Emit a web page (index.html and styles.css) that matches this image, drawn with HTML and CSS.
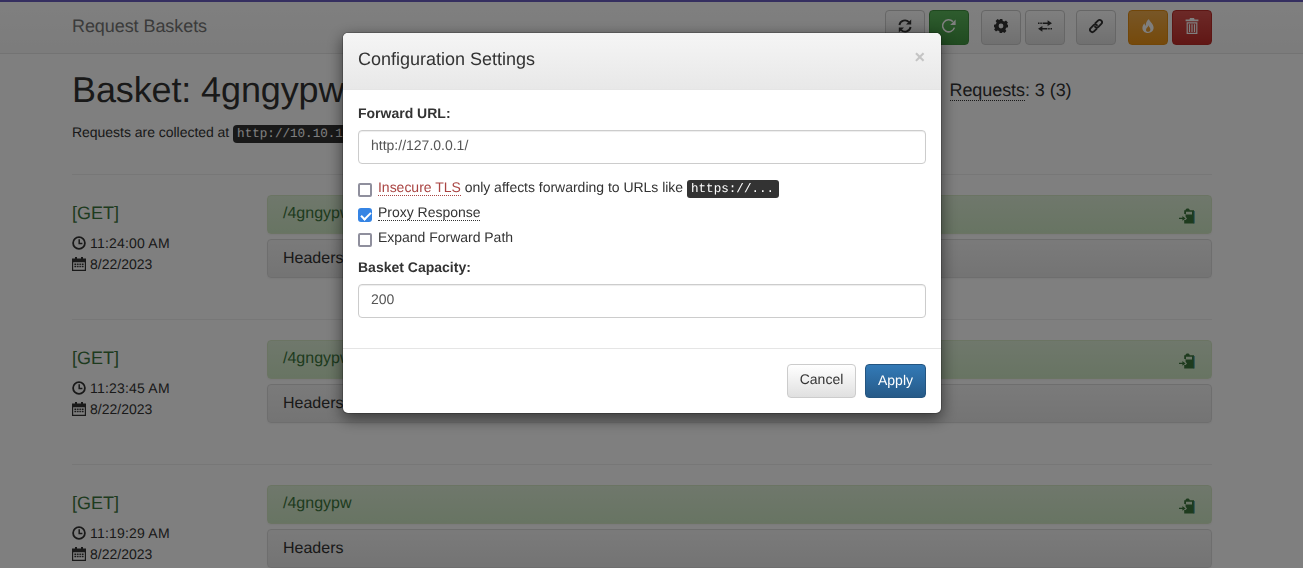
FILE: index.html
```html
<!DOCTYPE html>
<html lang="en">
<head>
<meta charset="utf-8">
<title>Request Baskets</title>
<link rel="stylesheet" href="styles.css">
</head>
<body>
<svg class="defs" aria-hidden="true">
  <symbol id="i-refresh" viewBox="0 0 14 14">
    <path d="M1.4 6A5.6 5.6 0 0 1 11 3.2" fill="none" stroke="currentColor" stroke-width="1.9"/>
    <path d="M13.2 .4V5.6H8Z" fill="currentColor"/>
    <path d="M12.6 8A5.6 5.6 0 0 1 3 10.8" fill="none" stroke="currentColor" stroke-width="1.9"/>
    <path d="M.8 13.6V8.4H6Z" fill="currentColor"/>
  </symbol>
  <symbol id="i-repeat" viewBox="0 0 14 14">
    <path d="M12.4 8.6A6 6 0 1 1 10.9 2.6" fill="none" stroke="currentColor" stroke-width="1.5"/>
    <path d="M13.6 .6V6H8.2Z" fill="currentColor"/>
  </symbol>
  <symbol id="i-cog" viewBox="0 0 14 14">
    <path fill-rule="evenodd" fill="currentColor" d="M5.7 0H8.3L8.8 1.9 10.4 2.6 12 1.6 13.9 3.5 12.9 5.1 13.6 5.7 14 5.7V8.3L12.1 8.8 11.4 10.4 12.4 12 10.5 13.9 8.9 12.9 8.3 13.1V14H5.7L5.2 12.1 3.6 11.4 2 12.4 .1 10.5 1.1 8.9 .4 8.3H0V5.7L1.9 5.2 2.6 3.6 1.6 2 3.5 .1 5.1 1.1 5.7 .9ZM7 4.6A2.4 2.4 0 1 0 7 9.4 2.4 2.4 0 1 0 7 4.6Z"/>
  </symbol>
  <symbol id="i-transfer" viewBox="0 0 14 14">
    <path fill="currentColor" d="M0 3.4H1.5V5H0ZM2.3 3.4H3.8V5H2.3ZM4.6 3.4H9.6V1.2L14 4.2 9.6 7V5H4.6ZM4.4 7V9H9.4V10.6H4.4V12.8L0 9.8ZM10.2 9H11.7V10.6H10.2ZM12.5 9H14V10.6H12.5Z"/>
  </symbol>
  <symbol id="i-link" viewBox="0 0 14 16">
    <g fill="none" stroke="currentColor" stroke-width="1.9" stroke-linecap="round">
      <path d="M6.4 5.2 9 2.6A2.3 2.3 0 0 1 12.3 5.9L9.4 8.8A2.3 2.3 0 0 1 6.1 8.8"/>
      <path d="M7.6 10.8 5 13.4A2.3 2.3 0 0 1 1.7 10.1L4.6 7.2A2.3 2.3 0 0 1 7.9 7.2"/>
    </g>
  </symbol>
  <symbol id="i-fire" viewBox="0 0 14 14">
    <path fill="currentColor" fill-rule="evenodd" d="M8 0C8.2 2.4 12.6 4.4 12.6 8.8 12.6 11.8 10.2 14 7 14 3.6 14 1.4 11.8 1.4 9 1.4 7.2 2.2 5.4 3.6 4.2 3.6 5.4 4 6.2 4.8 6.8 4.6 4 5.8 1.6 8 0ZM7.4 6.2C7.4 8 5 8.8 5 11 5 12 5.8 12.8 7 12.8 8.4 12.8 9.4 11.8 9.4 10.4 9.4 8.4 7.8 8 7.4 6.2Z"/>
  </symbol>
  <symbol id="i-trash" viewBox="0 0 14 16">
    <path fill="currentColor" fill-rule="evenodd" d="M5 0H9L9.6 1.6H13.4V3.2H.6V1.6H4.4ZM1.6 4.2H12.4V16H1.6ZM2.8 5.4V14.8H11.2V5.4ZM3.9 6.2H5.1V14H3.9ZM6.4 6.2H7.6V14H6.4ZM8.9 6.2H10.1V14H8.9Z"/>
  </symbol>
  <symbol id="i-time" viewBox="0 0 14 14">
    <circle cx="7" cy="7" r="5.9" fill="none" stroke="currentColor" stroke-width="1.8"/>
    <path d="M7.2 3.2V7.4H10.4" fill="none" stroke="currentColor" stroke-width="1.5"/>
  </symbol>
  <symbol id="i-calendar" viewBox="0 0 14 14">
    <path fill="currentColor" fill-rule="evenodd" d="M3 0H5V1.4H9V0H11V1.4H14V14H0V1.4H3ZM1.2 5.2V12.8H12.8V5.2ZM2.4 6.4H4.3V7.9H2.4ZM5.1 6.4H6.6V7.9H5.1ZM7.4 6.4H8.9V7.9H7.4ZM9.7 6.4H11.6V7.9H9.7ZM2.4 8.8H4.3V10.3H2.4ZM5.1 8.8H6.6V10.3H5.1ZM7.4 8.8H8.9V10.3H7.4ZM9.7 8.8H11.6V10.3H9.7Z"/>
  </symbol>
  <symbol id="i-clip" viewBox="0 0 16 16">
    <path fill="currentColor" fill-rule="evenodd" d="M8.6 .4C9.8.4 10.6 1 10.8 2.2H15V15.6H5.2V12H6.6L8 10.4 6.6 8.8V6H5.2V2.2H6.4C6.6 1 7.4.4 8.6.4ZM7 3.8V6.6H13V3.8Z"/>
    <path fill="currentColor" d="M0 9.8H3.4V8L6.6 10.4 3.4 12.8V11H0Z"/>
    <path fill="#2a8c9c" d="M14.6 3H15.6V15.6H14.6Z"/>
  </symbol>
</svg>

<nav class="navbar">
  <div class="container nav-inner">
    <a class="brand">Request Baskets</a>
    <div class="toolbar">
      <div class="tool-group">
        <button class="btn"><svg class="ico"><use href="#i-refresh"/></svg></button>
        <button class="btn btn-success"><svg class="ico"><use href="#i-repeat"/></svg></button>
      </div>
      <div class="tool-group">
        <button class="btn"><svg class="ico"><use href="#i-cog"/></svg></button>
        <button class="btn"><svg class="ico"><use href="#i-transfer"/></svg></button>
      </div>
      <div class="tool-group">
        <button class="btn"><svg class="ico ico-tall"><use href="#i-link"/></svg></button>
      </div>
      <div class="tool-group">
        <button class="btn btn-warning"><svg class="ico"><use href="#i-fire"/></svg></button>
        <button class="btn btn-danger"><svg class="ico ico-tall"><use href="#i-trash"/></svg></button>
      </div>
    </div>
  </div>
</nav>

<main class="container">
  <div class="basket-head">
    <div class="basket-title">
      <h1>Basket: 4gngypw</h1>
      <p class="collect">Requests are collected at <code class="code">http://10.10.11.224:55555/4gngypw</code></p>
    </div>
    <h4 class="basket-count"><abbr class="hint">Requests</abbr>: 3 (3)</h4>
  </div>

  <hr class="rule">
  <section class="req">
    <div class="req-meta">
      <h4 class="method">[GET]</h4>
      <div class="stamp stamp-time"><svg class="ico-sm"><use href="#i-time"/></svg>11:24:00 AM</div>
      <div class="stamp"><svg class="ico-sm"><use href="#i-calendar"/></svg>8/22/2023</div>
    </div>
    <div class="req-body">
      <div class="panel panel-path"><span>/4gngypw</span><svg class="ico-clip"><use href="#i-clip"/></svg></div>
      <div class="panel panel-head">Headers</div>
    </div>
  </section>

  <hr class="rule">
  <section class="req">
    <div class="req-meta">
      <h4 class="method">[GET]</h4>
      <div class="stamp stamp-time"><svg class="ico-sm"><use href="#i-time"/></svg>11:23:45 AM</div>
      <div class="stamp"><svg class="ico-sm"><use href="#i-calendar"/></svg>8/22/2023</div>
    </div>
    <div class="req-body">
      <div class="panel panel-path"><span>/4gngypw</span><svg class="ico-clip"><use href="#i-clip"/></svg></div>
      <div class="panel panel-head">Headers</div>
    </div>
  </section>

  <hr class="rule">
  <section class="req">
    <div class="req-meta">
      <h4 class="method">[GET]</h4>
      <div class="stamp stamp-time"><svg class="ico-sm"><use href="#i-time"/></svg>11:19:29 AM</div>
      <div class="stamp"><svg class="ico-sm"><use href="#i-calendar"/></svg>8/22/2023</div>
    </div>
    <div class="req-body">
      <div class="panel panel-path"><span>/4gngypw</span><svg class="ico-clip"><use href="#i-clip"/></svg></div>
      <div class="panel panel-head">Headers</div>
    </div>
  </section>
</main>

<div class="backdrop"></div>

<div class="modal-wrap">
  <div class="modal" role="dialog">
    <header class="modal-header">
      <h4 class="modal-title">Configuration Settings</h4>
      <span class="close">×</span>
    </header>
    <div class="modal-body">
      <label class="field-label">Forward URL:</label>
      <input class="input" type="text" value="http://127.0.0.1/">
      <div class="checks">
        <label class="check"><input type="checkbox"><span><abbr class="hint danger">Insecure TLS</abbr> only affects forwarding to URLs like <kbd class="kbd">https://...</kbd></span></label>
        <label class="check"><input type="checkbox" checked><span><abbr class="hint">Proxy Response</abbr></span></label>
        <label class="check"><input type="checkbox"><span>Expand Forward Path</span></label>
      </div>
      <label class="field-label">Basket Capacity:</label>
      <input class="input" type="text" value="200">
    </div>
    <footer class="modal-footer">
      <button class="btn btn-cancel">Cancel</button>
      <button class="btn btn-primary">Apply</button>
    </footer>
  </div>
</div>
</body>
</html>
```
FILE: styles.css
```css
* { box-sizing: border-box; }
html, body { height: 100%; overflow: hidden; }
body {
  margin: 0;
  padding-right: 19px;
  background: #fff;
  color: #333;
  font: 14px/20px "Liberation Sans", Arial, sans-serif;
  text-rendering: geometricPrecision;
}
.defs { position: absolute; width: 0; height: 0; }

.container { width: 1140px; margin: 0 auto; }

.navbar {
  height: 54px;
  border-top: 2px solid #6b5fc0;
  border-bottom: 1px solid #e7e7e7;
  background: linear-gradient(#fff, #f8f8f8);
  margin-right: -19px;
  padding-right: 19px;
  margin-bottom: 14px;
}
.nav-inner { display: flex; justify-content: space-between; align-items: flex-start; }
.brand { font-size: 18px; line-height: 20px; color: #777; margin-top: 14px; letter-spacing: -.07px; }
.toolbar { display: flex; gap: 12px; margin-top: 8px; }
.tool-group { display: flex; gap: 4px; }
.tool-group:nth-child(3) { margin-left: -1px; }

.btn {
  display: inline-flex;
  align-items: center;
  justify-content: center;
  height: 35px;
  width: 40px;
  padding: 0;
  border: 1px solid #ccc;
  border-radius: 4px;
  background: linear-gradient(#fff, #e0e0e0);
  color: #333;
  font: 14px/20px "Liberation Sans", Arial, sans-serif;
  text-rendering: geometricPrecision;
}
.ico { width: 14px; height: 14px; margin-top: -4px; }
.ico-tall { height: 16px; }
.btn-success { background: linear-gradient(#5cb85c, #419641); border-color: #3e8f3e; color: #fff; }
.btn-warning { background: linear-gradient(#f0ad4e, #eb9316); border-color: #e38d13; color: #fff; }
.btn-danger { background: linear-gradient(#d9534f, #c12e2a); border-color: #b92c28; color: #fff; }

h1 { margin: 2px 0 0; font-size: 36px; line-height: 40px; font-weight: 500; letter-spacing: -.12px; }
.basket-head { display: flex; height: 106px; }
.basket-title { width: 877.5px; }
.collect { margin: 12px 0 0; letter-spacing: -.03px; }
.code {
  padding: 2px 4px;
  border-radius: 4px;
  background: #333;
  color: #fff;
  font: 12.6px "Liberation Mono", monospace;
  letter-spacing: 0;
}
.basket-count { margin: 12px 0 0; font-size: 18px; line-height: 20px; font-weight: 500; letter-spacing: -.07px; }
.hint { border-bottom: 1px dotted #333; }
.danger { color: #a94442; border-bottom-color: #a94442; }

.rule { margin: 0 0 20px; border: 0; border-top: 1px solid #eee; }
.req { display: flex; height: 124px; }
.req-meta { width: 195px; }
.method { margin: 8px 0 10px; font-size: 18px; line-height: 20px; font-weight: 500; color: #3c763d; }
.stamp { display: flex; align-items: center; height: 20px; color: #333; }
.stamp + .stamp { margin-top: 1px; }
.stamp-time { letter-spacing: .2px; }
.ico-sm { width: 14px; height: 14px; margin: -1px 4px 0 0; }
.req-body { flex: 1; display: flex; flex-direction: column; gap: 5px; }
.panel {
  display: flex;
  align-items: center;
  justify-content: space-between;
  height: 39px;
  padding: 0 15px;
  border: 1px solid #ddd;
  border-radius: 4px;
  font-size: 16px;
  box-shadow: 0 1px 2px rgba(0, 0, 0, .05);
}
.panel-path {
  padding-bottom: 1px;
  background: linear-gradient(#dff0d8, #d0e9c6);
  border-color: #d6e9c6;
  color: #3c763d;
}
.panel-head { background: linear-gradient(#f5f5f5, #e8e8e8); }
.ico-clip { width: 16px; height: 16px; margin: 4px 1px 0 0; }

.backdrop { position: fixed; inset: 0; background: rgba(0, 0, 0, .5); }

.modal-wrap {
  position: fixed;
  inset: 0;
  padding: 32px 19px 0 0;
}
.modal {
  width: 600px;
  margin: 0 auto;
  background: #fff;
  border: 1px solid rgba(0, 0, 0, .2);
  background-clip: padding-box;
  border-radius: 6px;
  box-shadow: 0 5px 15px rgba(0, 0, 0, .5);
}
.modal-header {
  display: flex;
  justify-content: space-between;
  align-items: flex-start;
  height: 57px;
  padding: 16px 15px;
  border-bottom: 1px solid #e5e5e5;
  border-radius: 5px 5px 0 0;
  background: linear-gradient(#f5f5f5, #e8e8e8);
}
.modal-title { margin: 0; font-size: 18px; line-height: 20px; font-weight: 500; }
.close { font-size: 18px; line-height: 16px; font-weight: 700; color: #c4c4c4; margin-right: 1px; }
.modal-body { padding: 13px 15px 0; height: 258px; }
.field-label { display: block; font-weight: 700; height: 20px; margin-bottom: 7px; }
.input {
  display: block;
  width: 100%;
  height: 34px;
  padding: 4px 12px 8px;
  border: 1px solid #ccc;
  border-radius: 4px;
  color: #555;
  font: 14px/20px "Liberation Sans", Arial, sans-serif;
  text-rendering: geometricPrecision;
  box-shadow: inset 0 1px 1px rgba(0, 0, 0, .075);
}
.checks { margin: 10px 0 8px; }
.check { display: flex; align-items: center; height: 25px; letter-spacing: -.02px; }
.check input {
  appearance: none;
  flex: none;
  width: 14px;
  height: 14px;
  margin: 7px 6px 0 0;
  border: 2px solid #8f8f9d;
  border-radius: 2px;
  background: #fff;
}
.check input:checked {
  border: 0;
  border-radius: 3px;
  background: #3584e4;
  position: relative;
}
.check input:checked::after {
  content: "";
  position: absolute;
  left: 5px;
  top: 2px;
  width: 4px;
  height: 8px;
  border: solid #fff;
  border-width: 0 2px 2px 0;
  transform: rotate(45deg);
}
.check span { line-height: 20px; }
.kbd {
  padding: 2px 5px 2px 4px;
  border-radius: 3px;
  background: #333;
  color: #fff;
  font: 12.6px "Liberation Mono", monospace;
  letter-spacing: 0;
}
.modal-footer {
  display: flex;
  justify-content: flex-end;
  gap: 9px;
  height: 65px;
  padding: 15px;
  border-top: 1px solid #e5e5e5;
}
.btn-cancel { width: 69px; height: 34px; padding-bottom: 4px; }
.btn-primary {
  width: 61px;
  height: 34px;
  padding-bottom: 3px;
  background: linear-gradient(#337ab7, #265a88);
  border-color: #245580;
  color: #fff;
}
```
